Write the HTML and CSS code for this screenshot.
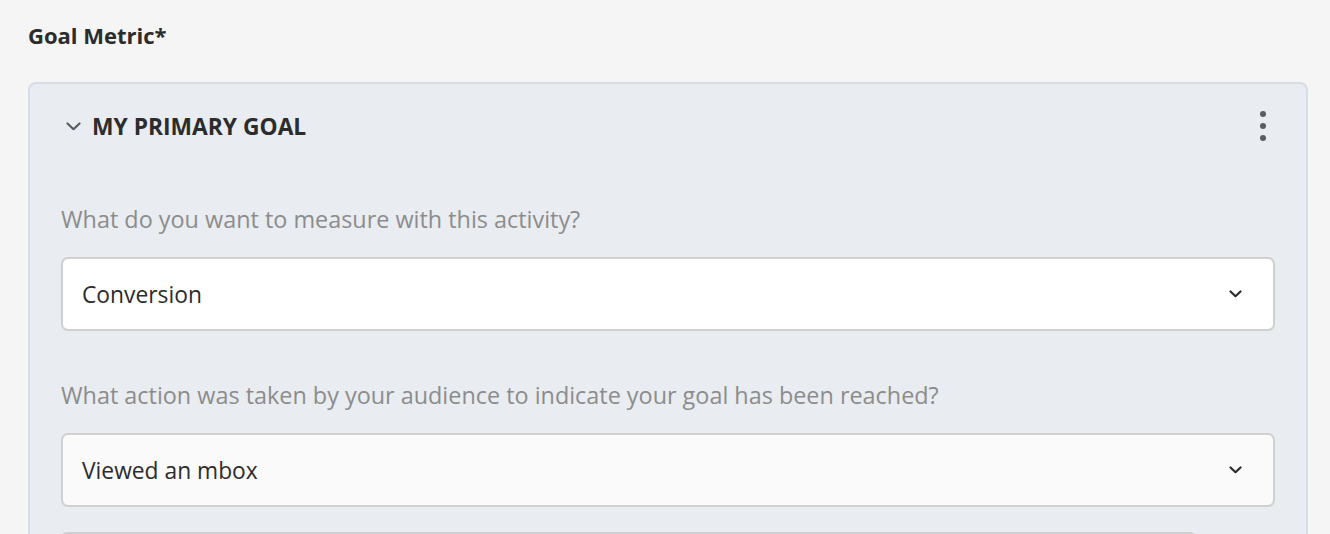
FILE: index.html
```html
<!DOCTYPE html>
<html lang="en">
<head>
<meta charset="utf-8">
<title>Goal Metric</title>
<link rel="stylesheet" href="styles.css">
</head>
<body>
<main class="page">
  <h2 class="section-title">Goal Metric*</h2>
  <section class="goal-card">
    <header class="goal-head">
      <button class="collapse" aria-label="Collapse">
        <svg width="15" height="9" viewBox="0 0 15 9"><path d="M1.5 1.5 L7.5 7.2 L13.5 1.5" fill="none" stroke="#5c5c5c" stroke-width="2.2" stroke-linecap="round" stroke-linejoin="round"/></svg>
      </button>
      <h3 class="goal-name">MY PRIMARY GOAL</h3>
      <button class="more" aria-label="More">
        <span class="dot"></span><span class="dot"></span><span class="dot"></span>
      </button>
    </header>
    <div class="field">
      <label class="field-label">What do you want to measure with this activity?</label>
      <div class="select">
        <span class="select-value">Conversion</span>
        <svg class="select-chev" width="13" height="8" viewBox="0 0 13 8"><path d="M1.5 1.5 L6.5 6.2 L11.5 1.5" fill="none" stroke="#2c2c2c" stroke-width="2.2" stroke-linecap="round" stroke-linejoin="round"/></svg>
      </div>
    </div>
    <div class="field">
      <label class="field-label">What action was taken by your audience to indicate your goal has been reached?</label>
      <div class="select select-alt">
        <span class="select-value">Viewed an mbox</span>
        <svg class="select-chev" width="13" height="8" viewBox="0 0 13 8"><path d="M1.5 1.5 L6.5 6.2 L11.5 1.5" fill="none" stroke="#2c2c2c" stroke-width="2.2" stroke-linecap="round" stroke-linejoin="round"/></svg>
      </div>
    </div>
    <div class="next-box"></div>
  </section>
</main>
</body>
</html>
```
FILE: styles.css
```css
html, body {
  margin: 0;
  padding: 0;
  background: #f5f5f5;
  font-family: "Open Sans", "Noto Sans", sans-serif;
  color: #2c2c2c;
  overflow: hidden;
}
.page {
  padding: 22px 22px 0 28px;
}
.section-title {
  margin: 0;
  font-size: 22px;
  line-height: 26px;
  font-weight: 700;
  color: #2c2c2c;
}
.goal-card {
  margin-top: 34px;
  border: 2px solid #d6dde8;
  border-radius: 8px;
  background: #e9ecf1;
  padding: 0 31px;
  box-sizing: border-box;
  width: 1280px;
}
.goal-head {
  height: 84px;
  display: flex;
  align-items: center;
  margin-right: 2px;
}
.collapse {
  border: 0;
  background: none;
  padding: 0;
  margin: 0 11px 0 5px;
  display: flex;
  align-items: center;
}
.goal-name {
  margin: 0;
  font-size: 22.8px;
  font-weight: 700;
  color: #2c2c2c;
  flex: 1;
}
.more {
  border: 0;
  background: none;
  padding: 0;
  width: 20px;
  display: flex;
  flex-direction: column;
  align-items: center;
  gap: 6px;
}
.dot {
  width: 6px;
  height: 6px;
  border-radius: 50%;
  background: #5c5c5c;
}
.field {
  padding-top: 36px;
}
.field + .field {
  padding-top: 49px;
}
.field-label {
  display: block;
  font-size: 23.4px;
  line-height: 30px;
  color: #8c8c8c;
  margin-bottom: 23px;
}
.select {
  height: 74px;
  box-sizing: border-box;
  border: 2px solid #d0d0d0;
  border-radius: 7px;
  background: #ffffff;
  display: flex;
  align-items: center;
  padding: 0 31px 0 19px;
}
.select-alt {
  background: #fafafa;
}
.select-value {
  flex: 1;
  font-size: 22.8px;
  color: #2c2c2c;
}
.next-box {
  margin-top: 25px;
  width: 1133px;
  margin-left: -1px;
  height: 40px;
  border: 2px solid #cfcfcf;
  border-radius: 7px;
  background: #f3f3f3;
}
```
